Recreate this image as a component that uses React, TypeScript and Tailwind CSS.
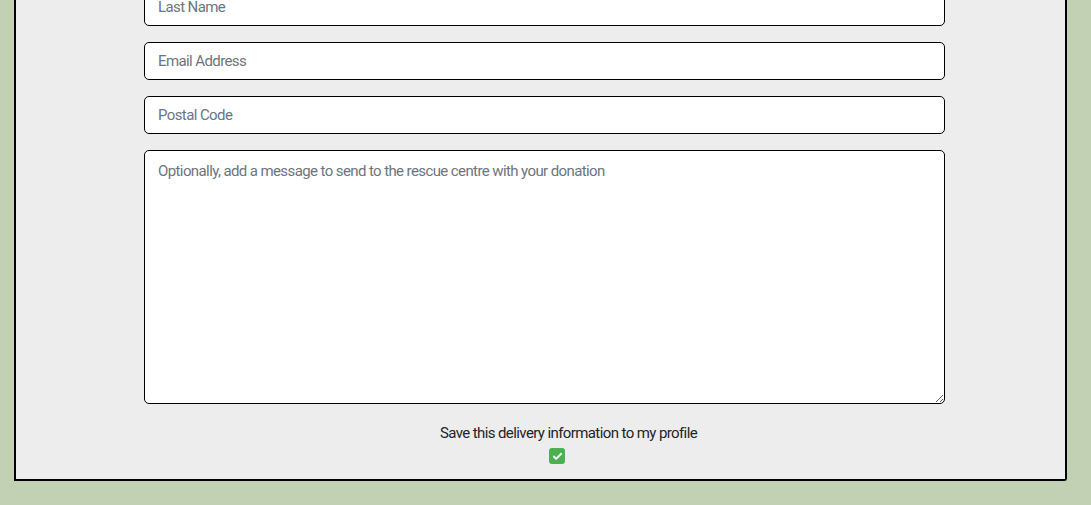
import { Check } from 'lucide-react';

const fieldFont = { fontFamily: 'Roboto, "Liberation Sans", sans-serif' };

const Field = ({ placeholder }: { placeholder: string }) => (
  <input
    type="text"
    placeholder={placeholder}
    className="block w-full h-[38px] bg-white border border-black rounded-[5px] px-[13px] text-[15px] tracking-[-0.6px] text-[#212529] placeholder-[#6c757d] focus:outline-none"
  />
);

export default function App() {
  return (
    <div className="h-[505px] w-full overflow-hidden bg-[#c2d1b4] px-[14px]" style={fieldFont}>
      <div className="w-[1053px] bg-[#ededed] border-2 border-t-0 border-black rounded-br-[3px] pl-[128px] pr-[120px] pb-[15px]">
        {/* Delivery details */}
        <div className="-mt-[12px] flex flex-col gap-[16px]">
          <Field placeholder="Last Name" />
          <Field placeholder="Email Address" />
          <Field placeholder="Postal Code" />
          <textarea
            placeholder="Optionally, add a message to send to the rescue centre with your donation"
            className="block w-full h-[254px] bg-white border border-black rounded-[5px] px-[13px] pt-[9px] text-[15px] tracking-[-0.6px] text-[#212529] placeholder-[#6c757d] focus:outline-none"
          />
        </div>

        {/* Save to profile */}
        <div className="mt-[20px] flex flex-col items-center">
          <label className="pl-[48px] text-[15px] leading-[18px] tracking-[-0.6px] text-[#212529]">
            Save this delivery information to my profile
          </label>
          <div className="mt-[6px] pl-[25px]">
            <span className="flex items-center justify-center w-[16px] h-[16px] rounded-[3px] bg-[#4caf50]">
              <Check size={11} strokeWidth={4} className="text-white" />
            </span>
          </div>
        </div>
      </div>
    </div>
  );
}
